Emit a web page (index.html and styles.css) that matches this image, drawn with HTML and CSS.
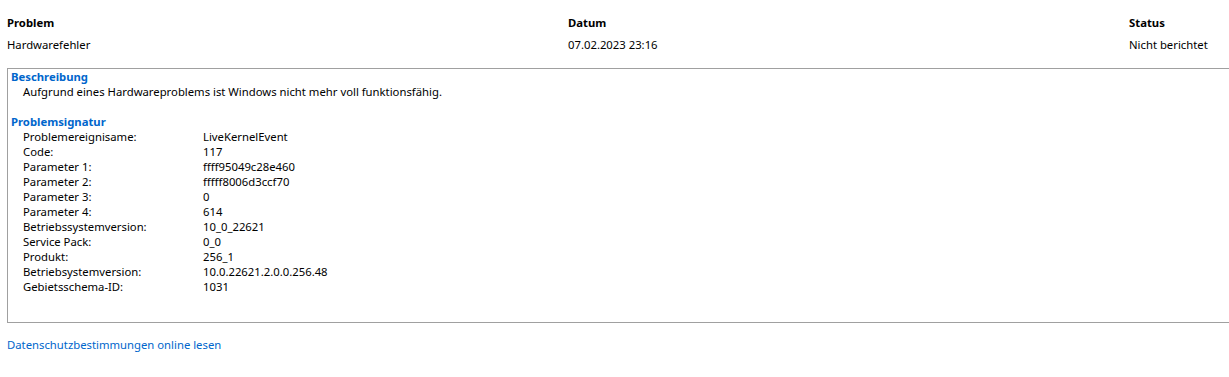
FILE: index.html
```html
<!DOCTYPE html>
<html lang="de">
<head>
  <meta charset="UTF-8" />
  <title>Problemdetails</title>
  <link rel="stylesheet" href="styles.css">
</head>
<body>
  <div class="summary">
    <div class="col-head">Problem</div>
    <div class="col-head">Datum</div>
    <div class="col-head">Status</div>
    <div class="col-cell">Hardwarefehler</div>
    <div class="col-cell">07.02.2023 23:16</div>
    <div class="col-cell">Nicht berichtet</div>
  </div>

  <div class="details">
    <div class="section-title">Beschreibung</div>
    <div class="desc">Aufgrund eines Hardwareproblems ist Windows nicht mehr voll funktionsfähig.</div>

    <div class="section-title sig-title">Problemsignatur</div>
    <div class="sig">
      <span>Problemereignisame:</span><span>LiveKernelEvent</span>
      <span>Code:</span><span>117</span>
      <span>Parameter 1:</span><span>ffff95049c28e460</span>
      <span>Parameter 2:</span><span>fffff8006d3ccf70</span>
      <span>Parameter 3:</span><span>0</span>
      <span>Parameter 4:</span><span>614</span>
      <span>Betriebssystemversion:</span><span>10_0_22621</span>
      <span>Service Pack:</span><span>0_0</span>
      <span>Produkt:</span><span>256_1</span>
      <span>Betriebsystemversion:</span><span>10.0.22621.2.0.0.256.48</span>
      <span>Gebietsschema-ID:</span><span>1031</span>
    </div>
  </div>

  <a class="privacy" href="#">Datenschutzbestimmungen online lesen</a>
</body>
</html>
```

FILE: styles.css
```css
body {
  font-family: "Noto Sans", "Open Sans", sans-serif;
  font-size: 11.3px;
  color: #000;
  background: #fff;
  margin: 0;
  padding: 15px 0 0 7px;
  overflow: hidden;
}

.summary {
  display: grid;
  grid-template-columns: 561px 561px auto;
  row-gap: 6px;
}

.col-head {
  font-weight: bold;
  line-height: 16px;
}

.col-cell {
  line-height: 16px;
}

.details {
  margin-top: 15px;
  border: 1px solid #a0a0a0;
  border-right: none;
  padding: 0 0 0 3px;
  box-sizing: border-box;
  height: 255px;
}

.section-title {
  color: #0066cc;
  font-weight: bold;
  line-height: 15px;
}

.sig-title {
  margin-top: 15px;
}

.desc {
  padding-left: 12px;
  line-height: 15px;
}

.sig {
  display: grid;
  grid-template-columns: 180px auto;
  padding-left: 12px;
  line-height: 15px;
}

.privacy {
  display: inline-block;
  margin-top: 14px;
  color: #0066cc;
  text-decoration: none;
  line-height: 16px;
}
```
